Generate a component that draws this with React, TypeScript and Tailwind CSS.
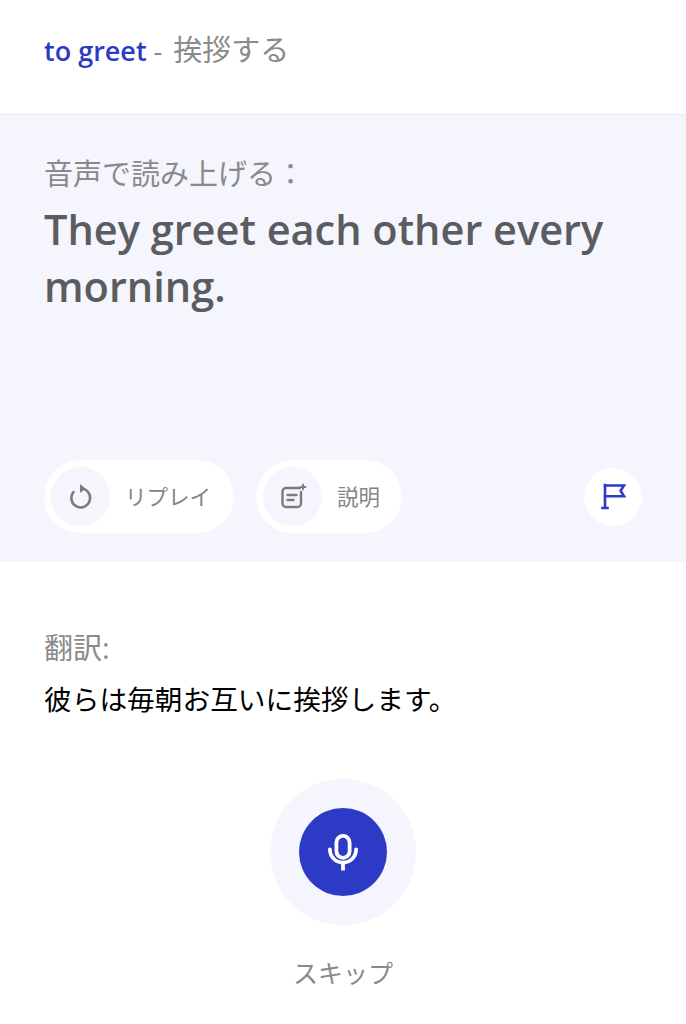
const font = "font-['Open_Sans','Noto_Sans_CJK_JP',sans-serif]"

function ReplayIcon() {
	return (
		<svg width="26" height="28" viewBox="0 0 26 28" fill="none" stroke="#7b7b7b" strokeWidth="2.5" strokeLinecap="round">
			<path d="M5.5 9A9.4 9.4 0 1 0 13 5.6" />
			<path d="M12 1l5.6 4.8L12 10z" fill="#7b7b7b" stroke="none" />
		</svg>
	)
}

function NoteIcon() {
	return (
		<svg width="28" height="28" viewBox="0 0 28 28" fill="none" stroke="#7b7b7b" strokeWidth="2.4" strokeLinecap="round" strokeLinejoin="round">
			<path d="M21 5H7a3.5 3.5 0 0 0-3.5 3.5v12A3.5 3.5 0 0 0 7 24h11.5a3.5 3.5 0 0 0 3.5-3.5V9" />
			<path d="M8.5 12h9M8.5 17h6" />
			<path d="M24 1.5v5M21.5 4h5" strokeWidth="1.8" />
		</svg>
	)
}

function FlagIcon() {
	return (
		<svg width="26" height="30" viewBox="0 0 26 30" fill="none" stroke="#2d3ac6" strokeWidth="2.6" strokeLinecap="square" strokeLinejoin="miter">
			<path d="M5 3v23M2.5 26h5" />
			<path d="M5 3.5h19l-3.4 5.2 3.4 5.6H5" />
		</svg>
	)
}

function MicIcon() {
	return (
		<svg width="30" height="37" viewBox="0 0 30 37" fill="none" stroke="#ffffff" strokeWidth="3.8" strokeLinecap="round">
			<rect x="8.4" y="1.9" width="13.2" height="22" rx="6.6" />
			<path d="M1.9 15.5a13.1 13.1 0 0 0 26.2 0" />
			<path d="M15 30v6.5" strokeLinecap="butt" />
		</svg>
	)
}

export default function App() {
	return (
		<div className={`${font} flex min-h-[1024px] w-full flex-col overflow-hidden bg-white`}>
			<header className="flex h-[115px] items-start border-b border-[#e8e9f0] px-[44px] pt-[32px]">
				<p className="text-[27px] leading-[36px] text-[#8a8a8a]">
					<span className="font-semibold text-[#2d3ac6]">to greet</span> - <span className="ml-[4px] text-[29px]">挨拶する</span>
				</p>
			</header>

			<section className="flex h-[447px] flex-col bg-[#f4f5fd] px-[44px] pt-[41px]">
				<p className="text-[29px] leading-[36px] text-[#8a8a8a]">音声で読み上げる：</p>
				<h1 className="mt-[9px] text-[41.5px] leading-[57px] font-semibold text-[#5a5c60]">They greet each other every morning.</h1>

				<div className="mt-auto mb-[29px] flex items-center">
					<button className="flex h-[73px] w-[190px] items-center rounded-full bg-white pl-[7px]">
						<span className="flex h-[59px] w-[59px] items-center justify-center rounded-full bg-[#f4f5fd]">
							<ReplayIcon />
						</span>
						<span className="mt-[1px] ml-[15px] text-[21.5px] text-[#858585]">リプレイ</span>
					</button>
					<button className="ml-[22px] flex h-[73px] w-[146px] items-center rounded-full bg-white pl-[7px]">
						<span className="flex h-[59px] w-[59px] items-center justify-center rounded-full bg-[#f4f5fd]">
							<NoteIcon />
						</span>
						<span className="mt-[1px] ml-[15px] text-[21.5px] text-[#858585]">説明</span>
					</button>
					<button className="ml-auto flex h-[58px] w-[58px] items-center justify-center rounded-full bg-white">
						<FlagIcon />
					</button>
				</div>
			</section>

			<section className="px-[44px] pt-[66px]">
				<p className="text-[29px] leading-[40px] text-[#8a8a8a]">翻訳:</p>
				<p className="mt-[11px] text-[27.7px] leading-[40px] text-black">彼らは毎朝お互いに挨拶します。</p>
			</section>

			<div className="mt-[60px] flex flex-col items-center">
				<div className="flex h-[146px] w-[146px] items-center justify-center rounded-full bg-[#f4f5fd]">
					<button className="flex h-[88px] w-[88px] items-center justify-center rounded-full bg-[#2d3ac6]">
						<MicIcon />
					</button>
				</div>
				<p className="mt-[30px] text-[25px] leading-[36px] text-[#8a8a8a]">スキップ</p>
			</div>
		</div>
	)
}
